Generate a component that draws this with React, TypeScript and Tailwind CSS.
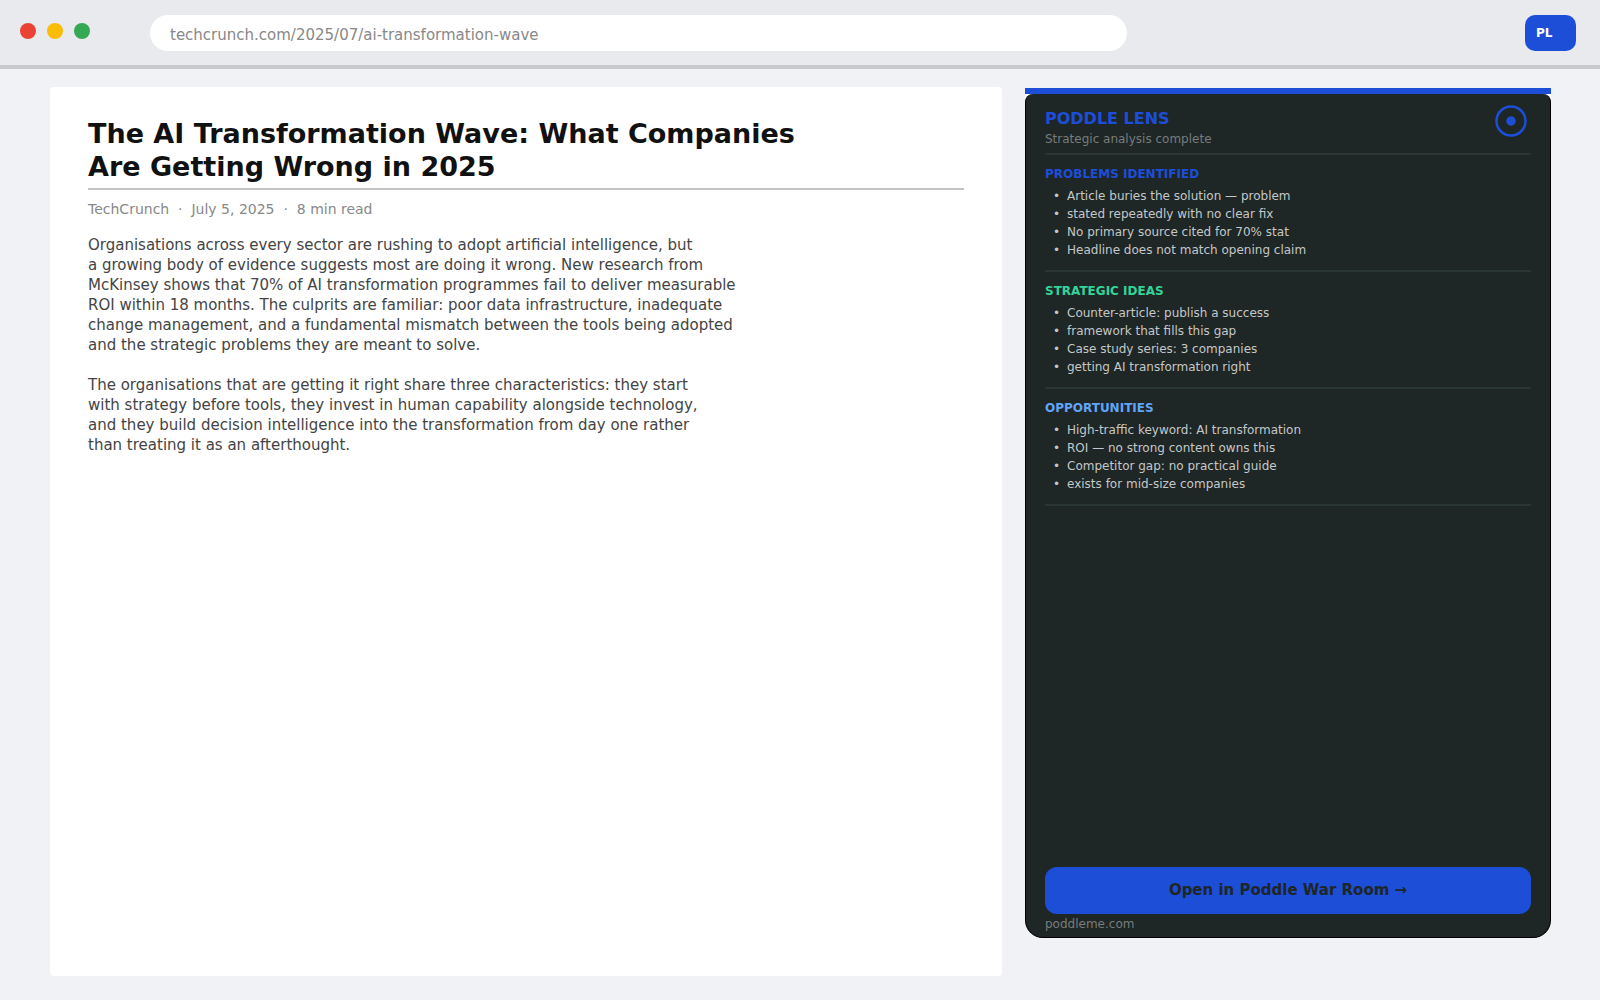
type Section = { title: string; color: string; items: string[] };

const sections: Section[] = [
  {
    title: 'PROBLEMS IDENTIFIED',
    color: 'text-[#1d4ed8]',
    items: [
      'Article buries the solution — problem',
      'stated repeatedly with no clear fix',
      'No primary source cited for 70% stat',
      'Headline does not match opening claim',
    ],
  },
  {
    title: 'STRATEGIC IDEAS',
    color: 'text-[#34d399]',
    items: [
      'Counter-article: publish a success',
      'framework that fills this gap',
      'Case study series: 3 companies',
      'getting AI transformation right',
    ],
  },
  {
    title: 'OPPORTUNITIES',
    color: 'text-[#60a5fa]',
    items: [
      'High-traffic keyword: AI transformation',
      'ROI — no strong content owns this',
      'Competitor gap: no practical guide',
      'exists for mid-size companies',
    ],
  },
];

const paragraphs: string[][] = [
  [
    'Organisations across every sector are rushing to adopt artificial intelligence, but',
    'a growing body of evidence suggests most are doing it wrong. New research from',
    'McKinsey shows that 70% of AI transformation programmes fail to deliver measurable',
    'ROI within 18 months. The culprits are familiar: poor data infrastructure, inadequate',
    'change management, and a fundamental mismatch between the tools being adopted',
    'and the strategic problems they are meant to solve.',
  ],
  [
    'The organisations that are getting it right share three characteristics: they start',
    'with strategy before tools, they invest in human capability alongside technology,',
    'and they build decision intelligence into the transformation from day one rather',
    'than treating it as an afterthought.',
  ],
];

function BrowserBar() {
  return (
    <header className="flex h-[69px] shrink-0 items-start border-b-4 border-[#c8c9cb] bg-[#e8eaed] pt-[15px] pr-6 pl-5">
      <div className="mt-2 flex w-[130px] shrink-0 gap-[11px]">
        <button type="button" aria-label="Close window" className="size-4 rounded-full bg-[#ea4335]" />
        <button type="button" aria-label="Minimise window" className="size-4 rounded-full bg-[#fbbc05]" />
        <button type="button" aria-label="Maximise window" className="size-4 rounded-full bg-[#34a853]" />
      </div>
      <input
        type="text"
        aria-label="Address"
        defaultValue="techcrunch.com/2025/07/ai-transformation-wave"
        className="h-9 min-w-0 max-w-[977px] flex-1 rounded-full bg-white px-5 pt-1 text-[15px] text-[#888888] outline-none"
      />
      <button
        type="button"
        className="ml-auto h-9 w-[51px] shrink-0 rounded-[10px] bg-[#1d4ed8] pl-[11px] text-left text-xs font-bold text-white"
      >
        PL
      </button>
    </header>
  );
}

function Article() {
  return (
    <article className="rounded-sm bg-white px-[38px] pt-[30px]">
      <h1 className="border-b-2 border-[#c4c4c4] pb-[5px] text-[27px] leading-[33px] font-bold text-[#111111]">
        The AI Transformation Wave: What Companies
        <br />
        Are Getting Wrong in 2025
      </h1>
      <p className="mt-[9px] text-sm leading-5 whitespace-pre text-[#888888]">
        {'TechCrunch  ·  July 5, 2025  ·  8 min read'}
      </p>
      <div className="mt-4 space-y-5 text-[15px] leading-5 text-[#444444]">
        {paragraphs.map((lines) => (
          <p key={lines[0]}>
            {lines.map((line) => (
              <span key={line} className="block">
                {line}
              </span>
            ))}
          </p>
        ))}
      </div>
    </article>
  );
}

function LensPanel() {
  return (
    <aside className="mt-px mb-[38px] flex flex-col border-t-6 border-[#1d4ed8] bg-linear-to-b from-white from-50% to-transparent to-50%">
      <div className="flex flex-1 flex-col rounded-t-lg rounded-b-[18px] border border-t-0 border-black bg-[#1e2626] px-[19px] pb-[5px]">
        <div className="flex items-start justify-between border-b-2 border-[#2a3636] pt-[11px] pr-1 pb-1.5">
          <div className="pt-0.5">
            <h2 className="text-base leading-6 font-bold text-[#1d4ed8]">PODDLE LENS</h2>
            <p className="text-xs leading-4 text-[#777c7c]">Strategic analysis complete</p>
          </div>
          <svg width="32" height="32" viewBox="0 0 32 32" fill="none" aria-hidden="true">
            <circle cx="16" cy="16" r="14.5" stroke="#1d4ed8" strokeWidth="2.5" />
            <circle cx="16" cy="16" r="4.75" fill="#1d4ed8" />
          </svg>
        </div>
        {sections.map((section) => (
          <section key={section.title} className="border-b-2 border-[#2a3636] pt-[9px] pb-[11px]">
            <h3 className={`text-xs leading-5 font-bold ${section.color}`}>{section.title}</h3>
            <ul className="mt-[3px] text-xs leading-[18px] text-[#c4c8c8]">
              {section.items.map((item) => (
                <li key={item} className="flex">
                  <span className="w-[22px] pl-2">•</span>
                  {item}
                </li>
              ))}
            </ul>
          </section>
        ))}
        <button
          type="button"
          className="mt-auto h-[47px] rounded-xl bg-[#1d4ed8] text-[15px] font-bold text-[#1e2626]"
        >
          Open in Poddle War Room →
        </button>
        <a href="https://poddleme.com" className="mt-0.5 text-xs leading-4 text-[#777c7c]">
          poddleme.com
        </a>
      </div>
    </aside>
  );
}

export default function App() {
  return (
    <div className="flex min-h-screen flex-col bg-[#f0f2f5] font-['DejaVu_Sans',sans-serif]">
      <BrowserBar />
      <main className="grid flex-1 grid-cols-[952fr_526fr] gap-[23px] pt-[18px] pr-[49px] pb-6 pl-[50px]">
        <Article />
        <LensPanel />
      </main>
    </div>
  );
}
